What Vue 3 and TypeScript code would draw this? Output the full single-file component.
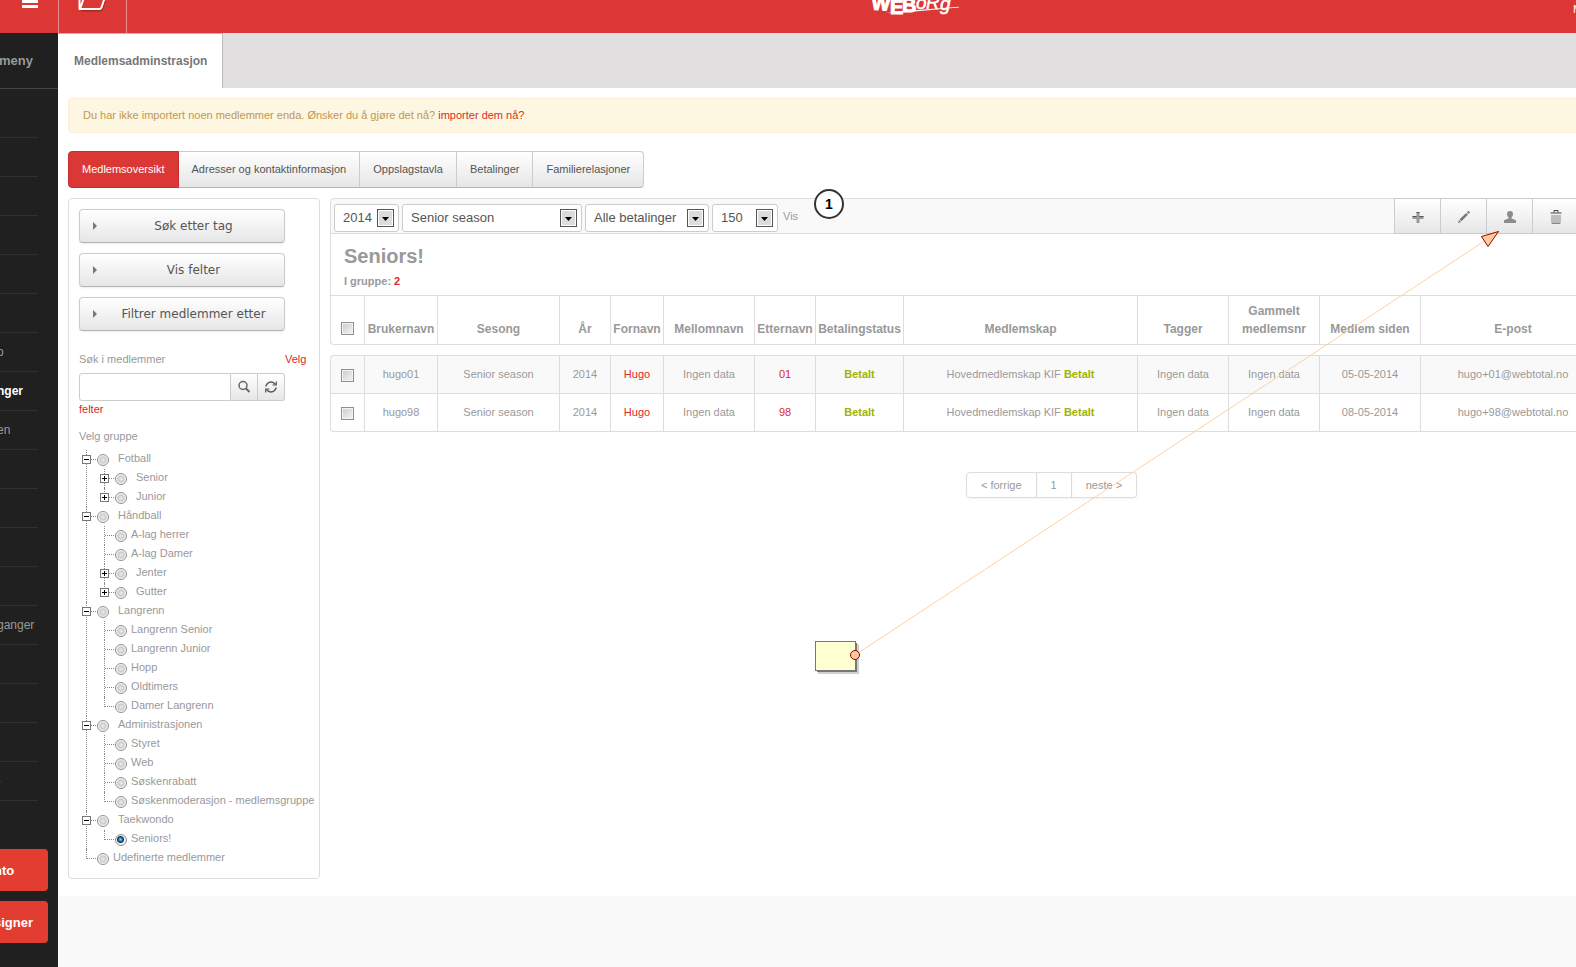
<script setup lang="ts">
import { ref } from 'vue'

interface TreeNode {
  label: string
  expandable?: boolean
  children?: TreeNode[]
}

interface Member {
  user: string
  last: string
  since: string
  mail: string
}

const menuItems: { text: string; kind?: string }[] = [
  { text: '' }, { text: '' }, { text: '' }, { text: '' }, { text: '' }, { text: '' },
  { text: 'o' },
  { text: 'nger', kind: 'current' },
  { text: 'en' },
  { text: '' }, { text: '' }, { text: '' }, { text: '' },
  { text: 'ganger' },
  { text: '' }, { text: '' }, { text: '' },
  { text: '-', kind: 'warn' },
]

const views = ['Medlemsoversikt', 'Adresser og kontaktinformasjon', 'Oppslagstavla', 'Betalinger', 'Familierelasjoner']
const filters = ['Søk etter tag', 'Vis felter', 'Filtrer medlemmer etter']

const groups: TreeNode[] = [
  { label: 'Fotball', expandable: true, children: [
    { label: 'Senior', expandable: true },
    { label: 'Junior', expandable: true },
  ] },
  { label: 'Håndball', expandable: true, children: [
    { label: 'A-lag herrer' },
    { label: 'A-lag Damer' },
    { label: 'Jenter', expandable: true },
    { label: 'Gutter', expandable: true },
  ] },
  { label: 'Langrenn', expandable: true, children: [
    { label: 'Langrenn Senior' },
    { label: 'Langrenn Junior' },
    { label: 'Hopp' },
    { label: 'Oldtimers' },
    { label: 'Damer Langrenn' },
  ] },
  { label: 'Administrasjonen', expandable: true, children: [
    { label: 'Styret' },
    { label: 'Web' },
    { label: 'Søskenrabatt' },
    { label: 'Søskenmoderasjon - medlemsgruppe' },
  ] },
  { label: 'Taekwondo', expandable: true, children: [{ label: 'Seniors!' }] },
  { label: 'Udefinerte medlemmer' },
]
const selected = ref('Seniors!')

const selects = [
  { id: 'year', name: 'År', value: '2014' },
  { id: 'season', name: 'Sesong', value: 'Senior season' },
  { id: 'payments', name: 'Betalinger', value: 'Alle betalinger' },
  { id: 'limit', name: 'Antall', value: '150' },
]

const columns = [
  'Brukernavn', 'Sesong', 'År', 'Fornavn', 'Mellomnavn', 'Etternavn', 'Betalingstatus',
  'Medlemskap', 'Tagger', 'Gammelt medlemsnr', 'Medlem siden', 'E-post',
]
const members: Member[] = [
  { user: 'hugo01', last: '01', since: '05-05-2014', mail: 'hugo+01@webtotal.no' },
  { user: 'hugo98', last: '98', since: '08-05-2014', mail: 'hugo+98@webtotal.no' },
]
</script>

<template>
  <div class="page">
    <header class="topbar">
      <button class="top-btn menu-btn" type="button" aria-label="Meny">
        <svg width="16" height="10" viewBox="0 0 16 10"><path d="M0 0h16v3H0zM0 5h16v3H0z" fill="#fff" /></svg>
      </button>
      <button class="top-btn folder-btn" type="button" aria-label="Mappe">
        <svg width="28" height="13" viewBox="0 0 28 13" fill="none" stroke-linejoin="round">
          <path d="M3 10.500h19q1.500 0 2-1.500L27 1" stroke="#a82723" stroke-width="2" />
          <path d="M1.500 -2v11h20q1.500 0 2-1.500L26 0V-2M2 9L5.500 -1" stroke="#fff" stroke-width="2" />
        </svg>
      </button>
      <div class="brand">
        <svg width="92" height="20" viewBox="0 0 92 20" role="img" aria-label="WEBorg" fill="#fff">
          <g class="brand-heavy" stroke="#fff" stroke-width="1">
            <text x="2" y="10" transform="rotate(4 10 10)">W</text>
            <text x="21" y="14">E</text>
            <text x="33" y="12">B</text>
          </g>
          <g class="brand-light" stroke="#fff" stroke-width="0.500">
            <text x="47" y="9">o</text>
            <text x="57" y="9">R</text>
            <text x="71" y="10">g</text>
          </g>
          <path d="M16 12.600L90 6.800L90 7.600L40 12z" />
        </svg>
      </div>
      <a class="account" href="#">M</a>
    </header>

    <div class="body">
      <nav class="sidebar" aria-label="Hovedmeny">
        <div class="side-title">meny</div>
        <ul class="side-list">
          <li v-for="(item, i) in menuItems" :key="i" :class="item.kind"><a v-if="item.text" href="#">{{ item.text }}</a></li>
        </ul>
        <button class="side-btn" type="button">nto</button>
        <button class="side-btn" type="button">signer</button>
      </nav>

      <main class="main">
        <div class="tabs"><a class="tab" href="#">Medlemsadminstrasjon</a></div>

        <div class="content">
          <p class="alert">Du har ikke importert noen medlemmer enda. Ønsker du å gjøre det nå? <a href="#">importer dem nå?</a></p>

          <div class="views">
            <button v-for="(v, i) in views" :key="v" type="button" :class="{ active: i === 0 }">{{ v }}</button>
          </div>

          <div class="columns">
            <aside class="side-panel">
              <button v-for="f in filters" :key="f" class="filter" type="button">
                <svg width="4" height="8" viewBox="0 0 4 8"><path d="M0 0l4 4-4 4z" fill="#777" /></svg>
                <span>{{ f }}</span>
              </button>

              <div class="search">
                <label for="member-search">Søk i medlemmer</label>
                <div class="search-box">
                  <input id="member-search" type="text">
                  <button type="button" aria-label="Søk">
                    <svg width="14" height="14" viewBox="0 0 14 14" fill="none" stroke="#666">
                      <circle cx="6" cy="5.500" r="4" stroke-width="1.500" />
                      <path d="M9 8.500l3.500 3.500" stroke-width="2" />
                    </svg>
                  </button>
                  <button type="button" aria-label="Oppdater">
                    <svg width="14" height="14" viewBox="0 0 14 14" fill="none" stroke="#555" stroke-width="1.500">
                      <path d="M2 6.500q0-1.500 1.500-3T7 2t3.500 1.500L11.500 4.500M12 7.500q0 1.500-1.500 3T7 12t-3.500-1.500L2.500 9.500" />
                      <path d="M12.300 1.500V5H8.500M1.700 12.500V9H5.500" stroke-width="1.200" />
                    </svg>
                  </button>
                </div>
                <a href="#"><span class="link-a">Velg</span><span class="link-b">felter</span></a>
              </div>

              <p class="tree-title">Velg gruppe</p>
              <ul class="tree">
                <li v-for="g in groups" :key="g.label">
                  <div class="node" :class="{ parent: g.expandable }">
                    <button v-if="g.expandable" type="button" class="toggle" aria-label="Skjul"></button>
                    <label><input v-model="selected" type="radio" name="group" :value="g.label"><span>{{ g.label }}</span></label>
                  </div>
                  <ul v-if="g.children" class="tree">
                    <li v-for="c in g.children" :key="c.label">
                      <div class="node" :class="{ parent: c.expandable }">
                        <button v-if="c.expandable" type="button" class="toggle plus" aria-label="Vis"></button>
                        <label><input v-model="selected" type="radio" name="group" :value="c.label"><span>{{ c.label }}</span></label>
                      </div>
                    </li>
                  </ul>
                </li>
              </ul>
            </aside>

            <section class="members">
              <div class="toolbar">
                <div v-for="s in selects" :key="s.id" class="select" :class="s.id">
                  <select :aria-label="s.name"><option>{{ s.value }}</option></select>
                  <svg width="17" height="18" viewBox="0 0 17 18">
                    <rect x="0.500" y="0.500" width="16" height="17" fill="#fff" stroke="#555" />
                    <rect x="2" y="2" width="13" height="14" fill="#dcdcdc" />
                    <path d="M5 8h7l-3.500 4z" fill="#000" />
                  </svg>
                </div>
                <span class="show">Vis</span>
                <span class="marker">1</span>
                <div class="actions">
                  <button type="button" aria-label="Legg til">
                    <svg width="14" height="14" viewBox="0 0 14 14"><path d="M5.500 2h3v4h4v3h-4v4h-3V9h-4V6h4z" fill="#999" /><path d="M5.500 2h3v1h-3zM1.500 6h4v1h-4zM8.500 6h4v1h-4z" fill="#555" /></svg>
                  </button>
                  <button type="button" aria-label="Rediger">
                    <svg width="14" height="14" viewBox="0 0 14 14"><path d="M1 13l1-3 2 2zM2.600 9.200L9.200 3l1.700 1.700-6.500 6.500zM9.800 2.300L11 1.200q.500-.300 1 .100l.600.600q.400.500 0 1L11.500 4z" fill="#777" /></svg>
                  </button>
                  <button type="button" aria-label="Bruker">
                    <svg width="14" height="14" viewBox="0 0 14 14"><path d="M7 1c2 0 3 1.200 3 3 0 1.500-.700 2.500-1.500 3.300v1.200c1.500.600 4 1.200 4.500 2V13H1v-2.500c.500-.800 3-1.400 4.500-2V7.300C4.700 6.500 4 5.500 4 4c0-1.800 1-3 3-3z" fill="#8c8c8c" /></svg>
                  </button>
                  <button type="button" aria-label="Slett">
                    <svg width="12" height="14" viewBox="0 0 12 14" fill="none" stroke="#888"><path d="M2 5v8.500h8V5M4 5v8M6 5v8M8 5v8" /><path d="M.500 3h11M4 2.500V.500h4v2" stroke="#444" /></svg>
                  </button>
                </div>
              </div>

              <div class="heading">
                <h1>Seniors!</h1>
                <p>I gruppe: <b>2</b></p>
              </div>

              <table>
                <colgroup>
                  <col class="w-check"><col class="w-user"><col class="w-season"><col class="w-year"><col class="w-first">
                  <col class="w-data"><col class="w-last"><col class="w-status"><col class="w-membership">
                  <col class="w-data"><col class="w-data"><col class="w-since"><col>
                </colgroup>
                <thead>
                  <tr>
                    <th><input type="checkbox" aria-label="Velg alle"></th>
                    <th v-for="c in columns" :key="c">{{ c }}</th>
                  </tr>
                </thead>
                <tbody>
                  <tr v-for="m in members" :key="m.user">
                    <td><input type="checkbox" :aria-label="m.user"></td>
                    <td>{{ m.user }}</td>
                    <td>Senior season</td>
                    <td>2014</td>
                    <td><a href="#">Hugo</a></td>
                    <td>Ingen data</td>
                    <td><a href="#">{{ m.last }}</a></td>
                    <td><b>Betalt</b></td>
                    <td>Hovedmedlemskap KIF <b>Betalt</b></td>
                    <td>Ingen data</td>
                    <td>Ingen data</td>
                    <td>{{ m.since }}</td>
                    <td>{{ m.mail }}</td>
                  </tr>
                </tbody>
              </table>

              <nav class="pager" aria-label="Sider">
                <a href="#">&lt; forrige</a><a href="#">1</a><a href="#">neste &gt;</a>
              </nav>
            </section>
          </div>
        </div>
      </main>
    </div>

    <svg class="callout" width="1576" height="967" viewBox="0 0 1576 967" aria-hidden="true">
      <rect x="818" y="644" width="41" height="30" fill="#d0d0d0" />
      <rect x="817" y="643" width="40" height="29" fill="#777" />
      <rect x="815.500" y="641.500" width="40" height="29" fill="#ffffd4" stroke="#777" />
      <path d="M855 655L1486 240" stroke="#ffd0a0" />
      <circle cx="855" cy="655" r="4.500" fill="#ffcc99" stroke="#900" />
      <path d="M1498.500 231.500L1481.500 236.500L1488 246.500z" fill="#ffcc99" stroke="#900" />
    </svg>
  </div>
</template>

<style>
body {
  margin: 0;
  background: #f9f9f9;
}
</style>

<style scoped>
.page {
  position: relative;
  display: flex;
  flex-direction: column;
  min-height: 100vh;
  overflow: hidden;
  font: 11px/18px "Liberation Sans", Arial, sans-serif;
  color: #999;
}
.page * { box-sizing: border-box; }
button, input, select { font: inherit; margin: 0; }
button { cursor: pointer; }
a { color: #dd2a2a; text-decoration: none; }
ul { list-style: none; margin: 0; padding: 0; }
p, h1 { margin: 0; }

.topbar {
  display: flex;
  height: 33px;
  background: #db3734;
  color: #fff;
}
.top-btn {
  display: flex;
  align-items: flex-start;
  padding: 0;
  border: 0;
  border-right: 1px solid #ea8f8c;
  background: none;
}
.menu-btn { width: 59px; padding-left: 22px; }
.folder-btn { width: 68px; padding-left: 19px; }
.brand { flex: 1; display: flex; justify-content: center; padding-left: 130px; }
.brand-heavy { font: bold 20px "Liberation Sans", sans-serif; }
.brand-light { font: italic 19px "Liberation Sans", sans-serif; }
.account { width: 3px; overflow: hidden; color: #fff; }

.body { display: flex; flex: 1; }
.sidebar {
  flex: 0 0 58px;
  background: #202020;
  overflow: hidden;
  color: #999;
  font-size: 12px;
}
.side-title {
  height: 56px;
  border-bottom: 1px solid #444;
  font: bold 13px/55px "Liberation Sans", sans-serif;
  text-indent: -1px;
}
.side-list { padding: 10px 20px 48px 0; }
.side-list li { height: 39px; line-height: 38px; border-bottom: 1px solid #303030; text-indent: -3px; }
.side-list a { color: #999; }
.side-list .current a { color: #fff; font-weight: bold; }
.side-list .warn a { color: #8a2a26; }
.side-btn {
  display: block;
  width: 48px;
  height: 42px;
  margin-bottom: 10px;
  padding: 2px 0 0;
  border: 0;
  border-radius: 0 4px 4px 0;
  background: #e23d30;
  color: #fff;
  font-size: 13px;
  font-weight: bold;
  text-align: left;
  text-indent: -6px;
}

.main { flex: 1; min-width: 0; }
.tabs { display: flex; height: 55px; background: #e1dfe0; }
.tab {
  padding: 0 15px 0 16px;
  border-right: 1px solid #bbb;
  border-top: 1px solid #d0b0b0;
  background: #fff;
  color: #777;
  font: bold 12px/54px "Liberation Sans", sans-serif;
}
.content { padding: 10px 0 17px 10px; background: #fff; }
.alert {
  margin-right: -29px;
  padding: 7px 14px 8px;
  border: 1px solid #fbeed5;
  border-radius: 4px;
  background: #fdf6e1;
  color: #c09853;
}
.views { display: flex; margin: 18px 0 10px; }
.views button {
  height: 37px;
  padding: 0 13px 2px;
  border: 1px solid #ccc;
  border-left-width: 0;
  border-bottom-color: #b3b3b3;
  background: linear-gradient(#fff, #e6e6e6);
  color: #555;
}
.views button:last-child { border-radius: 0 4px 4px 0; }
.views .active { border: 1px solid #c22f2c; border-radius: 4px 0 0 4px; background: #db3734; color: #fff; }

.columns { display: flex; gap: 10px; align-items: flex-start; }
.side-panel {
  flex: 0 0 252px;
  min-width: 0;
  padding: 10px;
  border: 1px solid #ddd;
  border-radius: 4px;
}
.filter {
  display: flex;
  align-items: center;
  width: 206px;
  height: 34px;
  margin-bottom: 10px;
  padding: 0 0 0 13px;
  border: 1px solid #ccc;
  border-bottom-color: #b3b3b3;
  border-radius: 4px;
  background: linear-gradient(#fff, #e6e6e6);
  box-shadow: 0 1px 2px rgba(0, 0, 0, 0.08);
  color: #555;
  font: 12px "DejaVu Sans", sans-serif;
}
.filter span { flex: 1; padding-left: 6px; }
.search {
  display: grid;
  grid-template-columns: 206px auto;
  grid-template-rows: 23px 28px 16px;
  padding-top: 9px;
}
.search a { display: contents; }
.link-a { grid-area: 1 / 2; }
.link-b { grid-area: 3 / 1; line-height: 16px; }
.search-box { grid-area: 2 / 1; display: flex; }
.search-box input { flex: 1; min-width: 0; border: 1px solid #ccc; border-radius: 3px 0 0 3px; background: #fff; }
.search-box button {
  display: flex;
  align-items: center;
  justify-content: center;
  width: 27px;
  padding: 0;
  border: 1px solid #ccc;
  border-left: 0;
  background: linear-gradient(#fff, #e6e6e6);
}
.search-box button:last-child { border-radius: 0 3px 3px 0; }
.tree-title { margin: 10px 0 5px; }

.tree { padding-left: 3px; }
.tree .tree { padding-left: 18px; }
.tree li { position: relative; }
.tree li::before {
  content: "";
  position: absolute;
  left: 4px;
  top: 0;
  bottom: 0;
  border-left: 1px dotted #888;
}
.tree li:last-child::before { bottom: auto; height: 10px; }
.node { position: relative; display: flex; align-items: center; height: 19px; padding-left: 15px; }
.node::before {
  content: "";
  position: absolute;
  left: 5px;
  top: 9px;
  width: 11px;
  border-top: 1px dotted #888;
}
.node label { display: flex; align-items: center; gap: 4px; line-height: 17px; white-space: nowrap; }
.node span { padding-bottom: 2px; }
.parent label { gap: 9px; }
.toggle {
  position: absolute;
  left: 0;
  top: 5px;
  width: 9px;
  height: 9px;
  padding: 0;
  border: 1px solid #777;
  background: linear-gradient(#000, #000) center / 5px 1px no-repeat, #fff;
}
.toggle.plus {
  background: linear-gradient(#000, #000) center / 5px 1px no-repeat, linear-gradient(#000, #000) center / 1px 5px no-repeat, #fff;
}
input[type="radio"] {
  appearance: none;
  flex: none;
  width: 12px;
  height: 12px;
  border: 1px solid #8e8f8f;
  border-radius: 50%;
  background: radial-gradient(circle at 50% 50%, #eee 0, #c8cbd0 3px, #fff 5px);
}
input[type="radio"]:checked { background: radial-gradient(circle at 45% 45%, #8fd8f5 0, #1a6fa8 2px, #0d2c4a 3px, #f0f0f0 4px); }
input[type="checkbox"] {
  appearance: none;
  display: block;
  width: 13px;
  height: 13px;
  margin: 0 auto;
  border: 1px solid #8e8f8f;
  background: linear-gradient(135deg, #c9cbd3, #f5f5f5);
  box-shadow: inset 0 0 0 1px #f4f4f4;
}

.members { flex: 1; min-width: 0; margin-right: -29px; }
.toolbar {
  position: relative;
  display: flex;
  align-items: center;
  gap: 3px;
  height: 36px;
  padding: 0 26px 0 3px;
  border: 1px solid #ddd;
  border-radius: 4px 0 0 0;
  background: #f9f9f9;
}
.select { position: relative; height: 28px; margin-top: 3px; }
.select select {
  appearance: none;
  width: 100%;
  height: 100%;
  padding: 0 8px;
  border: 1px solid #ccc;
  border-radius: 3px;
  background: #fff;
  color: #555;
  font-size: 13px;
}
.select svg { position: absolute; right: 5px; top: 5px; pointer-events: none; }
.year { width: 65px; }
.season { width: 180px; }
.payments { width: 124px; }
.limit { width: 66px; }
.show { padding-left: 2px; }
.marker {
  position: absolute;
  left: 483px;
  top: -10px;
  width: 30px;
  height: 30px;
  border: 2px solid #333;
  border-radius: 50%;
  background: #fff;
  color: #000;
  font: bold 14px/27px "Liberation Sans", sans-serif;
  text-align: center;
}
.actions { display: flex; align-self: stretch; margin: -1px 0 -1px auto; }
.actions button {
  display: flex;
  align-items: center;
  justify-content: center;
  width: 46px;
  padding: 1px 0 0;
  border: 1px solid #ccc;
  border-right-width: 0;
  background: linear-gradient(#fff, #e6e6e6);
}
.heading { height: 61px; padding: 11px 13px 0; border-left: 1px solid #ddd; font-weight: bold; }
.heading h1 { font-size: 20px; line-height: 22px; }
.heading p { margin-top: 5px; }
.heading b { color: #dd2a2a; }

table { width: 100%; table-layout: fixed; border-collapse: separate; border-spacing: 0; text-align: center; }
.w-check { width: 34px; }
.w-user { width: 73px; }
.w-season { width: 122px; }
.w-year { width: 51px; }
.w-first { width: 53px; }
.w-data { width: 91px; }
.w-last { width: 61px; }
.w-status { width: 88px; }
.w-membership { width: 234px; }
.w-since { width: 101px; }
th, td { padding: 0; border-left: 1px solid #ddd; border-bottom: 1px solid #ddd; }
th { height: 50px; padding-bottom: 6px; border-top: 1px solid #ddd; vertical-align: bottom; font-size: 12px; line-height: 18px; }
th input[type="checkbox"] { margin-bottom: 3px; }
td { height: 38px; padding-bottom: 2px; }
td:first-child { padding: 2px 0 0; }
tbody::before { content: ""; display: block; height: 10px; }
tbody tr:first-child td { height: 39px; border-top: 1px solid #ddd; background: #f9f9f9; }
tbody tr:first-child td:first-child { border-top-left-radius: 4px; }
thead th:first-child, tbody tr:last-child td:first-child { border-bottom-left-radius: 4px; }
td b { color: #9fb300; }

.pager { display: flex; justify-content: center; margin-top: 40px; padding-left: 168px; }
.pager a {
  height: 26px;
  padding: 0 14px;
  border: 1px solid #ddd;
  border-left-width: 0;
  box-shadow: 0 1px 2px rgba(0, 0, 0, 0.05);
  color: #999;
  line-height: 24px;
}
.pager a:first-child { border-left-width: 1px; border-radius: 4px 0 0 4px; }
.pager a:last-child { border-radius: 0 4px 4px 0; }

.callout { position: absolute; left: 0; top: 0; pointer-events: none; }
</style>
